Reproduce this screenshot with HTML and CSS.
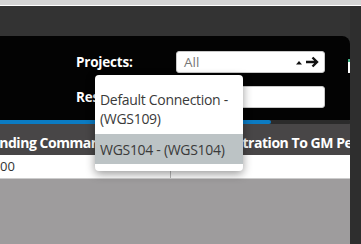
FILE: index.html
```html
<!DOCTYPE html>
<html lang="en">

<head>
    <meta charset="UTF-8">
    <meta name="viewport" content="width=device-width, initial-scale=1.0">
    <title>Commands</title>
    <link rel="stylesheet" href="styles.css">
</head>

<body>
    <div class="topbar"></div>
    <div class="page">
        <div class="content">
            <div class="spacer"></div>
            <div class="panel">
                <div class="filters">
                    <label class="label">Projects:</label>
                    <div class="select">
                        <span>All</span>
                        <svg class="arrows" width="24" height="12" viewBox="0 0 24 12">
                            <polygon points="0,8.5 6,8.5 3,5" fill="#111" />
                            <path d="M10 6 H21 M16.5 1.5 L21 6 L16.5 10.5" stroke="#111" stroke-width="2.4" fill="none" />
                        </svg>
                    </div>
                    <span class="mark"></span>
                    <label class="label">Results:</label>
                    <div class="input"></div>
                </div>

                <div class="dropdown">
                    <div class="option">Default Connection - (WGS109)</div>
                    <div class="option active">WGS104 - (WGS104)</div>
                </div>
            </div>
            <div class="progress">
                <div class="fill" style="width:271px"></div>
            </div>
            <table class="grid">
                <tr>
                    <th class="first">Pending Commands</th>
                    <th class="second">Registration To GM Period</th>
                </tr>
                <tr>
                    <td class="first">00</td>
                    <td class="second">0</td>
                </tr>
            </table>
            <div class="empty"></div>
        </div>
        <div class="rail"></div>
    </div>
</body>

</html>
```

FILE: styles.css
```css
body {
    font-family: "Open Sans", Arial, sans-serif;
    background: #333;
    margin: 0;
    padding: 0;
    overflow: hidden;
}

.topbar {
    height: 5px;
    background: #d4d4d4;
    border-bottom: 1px solid #fff;
}

.page {
    display: flex;
    height: 238px;
}

.content {
    width: 350px;
    display: flex;
    flex-direction: column;
}

.rail {
    flex: 1;
    background: #2e2e2e;
}

.spacer {
    height: 30px;
    background: #333;
}

.panel {
    position: relative;
    background: #030303;
    border-top-right-radius: 8px;
    padding: 15px 0 12px 76px;
}

.filters {
    display: grid;
    grid-template-columns: 100px 149px 1fr;
    row-gap: 13px;
    align-items: center;
}

.label {
    color: #fff;
    font-weight: bold;
    font-size: 13.5px;
    letter-spacing: -0.2px;
    white-space: nowrap;
}

.select,
.input {
    height: 22px;
    box-sizing: border-box;
    background: #fff;
    border: 1px solid #c8c8c8;
    border-radius: 3px;
}

.select {
    display: flex;
    align-items: center;
    justify-content: space-between;
    padding: 0 4px 0 7px;
    color: #777;
    font-size: 13.5px;
}

.mark {
    justify-self: end;
    align-self: start;
    width: 2px;
    height: 11px;
    margin-top: 8px;
    background: #fff;
    border-top: 3px solid #3fae84;
}

.dropdown {
    position: absolute;
    left: 95px;
    top: 39px;
    width: 148px;
    height: 96px;
    background: #fff;
    border-radius: 4px;
    box-shadow: 0 3px 10px #0006;
    z-index: 2;
    font-size: 14px;
    line-height: 19px;
    color: #3a3a3a;
    letter-spacing: -0.3px;
}

.option {
    padding: 6px 5px 5px;
}

.option:first-child {
    padding-top: 15px;
    padding-bottom: 6px;
}

.option.active {
    background: #bcc3c5;
}

.progress {
    height: 4px;
    background: #2b2b2b;
    border-radius: 0 2px 2px 0;
}

.fill {
    height: 4px;
    background: #0b7bc3;
    border-radius: 0 2px 2px 0;
}

.grid {
    border-collapse: collapse;
    width: 350px;
    table-layout: fixed;
}

.grid th {
    background: #484647;
    color: #fff;
    font-size: 14px;
    line-height: 19px;
    letter-spacing: -0.45px;
    text-align: left;
    padding: 9px 0 3px;
    white-space: nowrap;
    overflow: hidden;
}

.grid td {
    background: #fff;
    color: #333;
    font-size: 13px;
    line-height: 19px;
    padding: 2px 0 2px;
    border-bottom: 1px solid #ccc;
}

.first {
    width: 170px;
    border-right: 1px solid #bbb;
}

th.first {
    text-indent: -17px;
    border-right: none;
}

th.second {
    padding-left: 38px;
}

td.second {
    padding-left: 6px;
}

.empty {
    flex: 1;
    background: #9e9c9d;
}
```
